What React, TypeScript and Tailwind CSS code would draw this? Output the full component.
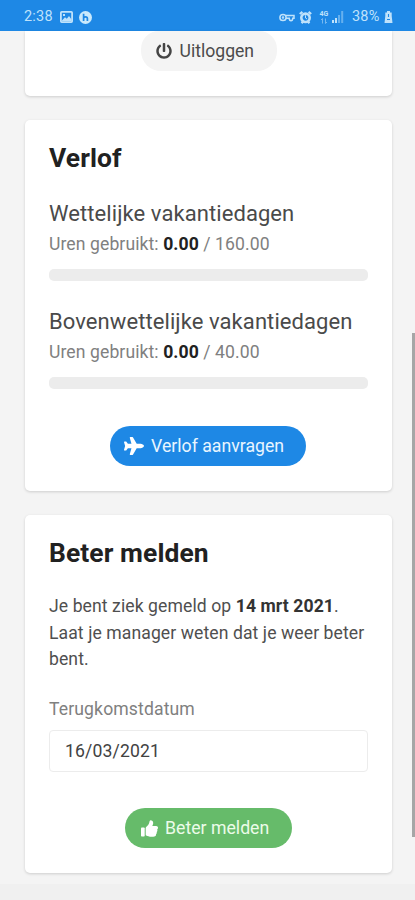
import { useState } from "react";
import { FaPlane, FaPowerOff } from "react-icons/fa";

const leaveTypes = [
  { name: "Wettelijke vakantiedagen", used: "0.00", total: "160.00" },
  { name: "Bovenwettelijke vakantiedagen", used: "0.00", total: "40.00" },
];

function ThumbsUp({ className }: { className?: string }) {
  return (
    <svg className={className} viewBox="0 0 17 17" fill="currentColor">
      <rect x="0" y="7.4" width="3.7" height="9.2" rx="0.8" />
      <path d="M4.7 8.2c0-.5.2-.8.5-1.1C6.600 5.700 8 4.600 8.300 2.600 8.500 1.300 8.700.2 9.600.2c1.400 0 2.600.9 2.600 2.700 0 1.300-.7 2.300-.9 3.200h3.900c1 0 1.800.8 1.800 1.700 0 .7-.3 1.200-.8 1.600.4.900.2 1.900-.5 2.500.3.900 0 1.700-.6 2.200.2 1.700-.9 2.700-3 2.700h-1.600c-2.500 0-3.700-.7-5.300-1.300-.3-.1-.5-.4-.5-.8z" />
    </svg>
  );
}

function StatusBar() {
  return (
    <header className="flex h-[31px] shrink-0 items-center bg-[#1e88e5] pt-[3px] pr-[22px] pl-6 text-[14.5px] text-[#bfe2fb]">
      <span className="w-[30px] tracking-[0.2px]">2:38</span>
      {/* gallery */}
      <svg className="ml-[6px] h-3 w-[13px]" viewBox="0 0 13 12" fill="none">
        <rect x="0.9" y="0.9" width="11.2" height="10.2" rx="0.8" stroke="currentColor" strokeWidth="1.8" />
        <path d="M2 9.5 5 6.2l1.8 1.6L9 5l2.5 3.5v1.8H2z" fill="currentColor" />
        <rect x="3" y="3" width="2" height="2" fill="currentColor" />
      </svg>
      <svg className="ml-[6px] h-[13px] w-[13px]" viewBox="0 0 13 13" fill="none">
        <circle cx="6.5" cy="6.5" r="6.5" fill="#c9e9fc" />
        <path d="M4.6 2.8v7.2M4.6 7c.3-1.3 3.8-1.8 3.8.6V10" stroke="#1e88e5" strokeWidth="1.7" />
      </svg>

      <div className="ml-auto flex items-center">
        {/* vpn key */}
        <svg className="h-[9px] w-[16px]" viewBox="0 0 16 9" fill="none" stroke="currentColor" strokeWidth="1.5">
          <circle cx="4" cy="4.500" r="3.100" />
          <circle cx="4" cy="4.500" r="0.500" />
          <path d="M6.800 2.500H15v2.700h-1.300c0 1.700-.6 2.500-1.700 2.500s-1.700-.8-1.700-2.500H7" />
        </svg>
        <svg className="ml-[4px] h-[13px] w-[13px]" viewBox="0 0 13 13" fill="none">
          <path d="M.8 3 3.4.9M12.2 3 9.6.9M2.6 12.3l1.2-1.5M10.4 12.3l-1.2-1.5" stroke="currentColor" strokeWidth="2.2" />
          <circle cx="6.5" cy="6.8" r="4.2" stroke="currentColor" strokeWidth="2.6" />
          <path d="M6.5 4.3V7l1.6 1" stroke="currentColor" strokeWidth="1" />
        </svg>
        <span className="ml-[7px] flex w-[10px] flex-col items-center text-[7px] leading-[7px] font-bold">
          4G
          <svg className="h-[6px] w-[8px]" viewBox="0 0 8 6" fill="none" stroke="currentColor" strokeWidth="0.9" opacity="0.6">
            <path d="M2.5 5.5v-5L1 2M5.5.5v5L7 4" />
          </svg>
        </span>
        <svg className="ml-[3px] h-3 w-[12px]" viewBox="0 0 12 12" fill="currentColor">
          <path d="M0 9h2v3H0zM3 7h2v5H3z" />
          <path d="M6 4h2v8H6zM9.2 0h2v12h-2z" opacity="0.45" />
        </svg>
        <span className="ml-[8px] w-[29px] tracking-[0.2px]">38%</span>
        <svg className="ml-[3px] h-3 w-[9px]" viewBox="0 0 8 12" fill="none">
          <path d="M2.5 0h3v1.400h1.700V5l.8 7H0l.8-7V1.400h1.700z" fill="currentColor" />
          <path d="M4 3v3M2.5 8.500h3" stroke="#1e88e5" strokeWidth="1.1" />
        </svg>
      </div>
    </header>
  );
}

export default function App() {
  const [returnDate, setReturnDate] = useState("16/03/2021");

  return (
    <div className="relative flex h-[900px] w-[415px] flex-col overflow-hidden bg-[#f4f4f4] font-[Roboto,sans-serif]">
      <StatusBar />

      <main className="flex flex-col gap-6 pr-[23px] pl-[25px]">
        <section className="flex h-[65px] justify-center rounded-b-[5px] bg-white shadow-[0_1px_3px_rgba(0,0,0,0.16)]">
          <button className="flex h-10 w-[136px] items-center rounded-t-[18px] rounded-b-[20px] bg-[#f4f4f4] pl-[15px] text-[17.6px] text-[#4b4b4b]">
            <FaPowerOff className="mr-2 size-4 text-[#444]" />
            Uitloggen
          </button>
        </section>

        <section className="flex h-[371px] flex-col rounded-[5px] bg-white px-6 pt-[22px] shadow-[0_1px_3px_rgba(0,0,0,0.16)]">
          <h2 className="text-[26.4px] leading-8 font-bold tracking-[0.1px] text-[#212121]">Verlof</h2>
          <div className="mt-[26px] flex flex-col gap-[27px]">
            {leaveTypes.map((leave) => (
              <div key={leave.name}>
                <h3 className="text-[22px] leading-7 tracking-[0.08px] whitespace-nowrap text-[#4a4a4a]">{leave.name}</h3>
                <p className="mt-1 text-[17.6px] leading-6 tracking-[0.08px] text-[#808080]">
                  Uren gebruikt: <strong className="font-bold text-[#212121]">{leave.used}</strong> / {leave.total}
                </p>
                <div className="mt-[13px] h-3 rounded-[5px] bg-[#ececec]" />
              </div>
            ))}
          </div>
          <button className="mt-[37px] ml-[61px] flex h-10 w-[196px] items-center rounded-full bg-[#1e88e5] pl-[14px] text-[17.7px] whitespace-nowrap text-[#e8f5ff]">
            <FaPlane className="mr-[7px] size-[20px] text-white" />
            Verlof aanvragen
          </button>
        </section>

        <section className="flex h-[358px] flex-col rounded-[5px] bg-white px-6 pt-[22px] shadow-[0_1px_3px_rgba(0,0,0,0.16)]">
          <h2 className="text-[26.4px] leading-8 font-bold tracking-[0.1px] text-[#212121]">Beter melden</h2>
          <p className="mt-6 text-[17.6px] leading-[26.5px] tracking-[0.08px] whitespace-nowrap text-[#4f4f4f]">
            Je bent ziek gemeld op <strong className="font-bold text-[#333]">14 mrt 2021</strong>.
            <br />
            Laat je manager weten dat je weer beter
            <br />
            bent.
          </p>
          <label htmlFor="return-date" className="mt-[24.5px] text-[17.6px] leading-6 tracking-[0.12px] text-[#808080]">
            Terugkomstdatum
          </label>
          <input
            id="return-date"
            value={returnDate}
            onChange={(e) => setReturnDate(e.target.value)}
            className="mt-[9px] h-[42px] w-[319px] shrink-0 rounded-[4px] border border-[#ececec] px-[15px] pb-px text-[17.6px] tracking-[0.15px] text-[#424242] outline-none"
          />
          <button className="mt-9 ml-[76px] flex h-10 w-[167px] shrink-0 items-center rounded-full bg-[#66bb6a] pl-4 text-[17.7px] whitespace-nowrap text-[#ecfbe9]">
            <ThumbsUp className="mr-[7px] size-[17px] text-white" />
            Beter melden
          </button>
        </section>
      </main>

      <div className="mt-[11px] grow bg-[#f0f0f0]" />

      {/* scroll thumb */}
      <div className="absolute top-[333px] right-0 h-[504px] w-[3.5px] bg-[#a6a6a6]" />
    </div>
  );
}
